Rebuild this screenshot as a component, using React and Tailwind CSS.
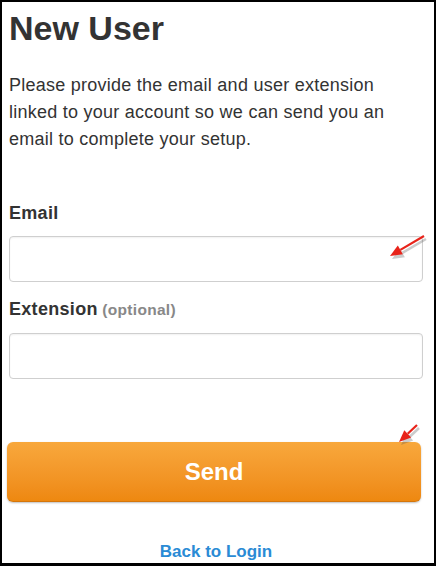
import React from "react";

const Arrow = ({ x1, y1, x2, y2 }) => {
  // arrow head pointing at (x2, y2)
  const ang = Math.atan2(y2 - y1, x2 - x1);
  const len = 12;
  const half = 5;
  const bx = x2 - len * Math.cos(ang);
  const by = y2 - len * Math.sin(ang);
  const px = -Math.sin(ang) * half;
  const py = Math.cos(ang) * half;
  const head = `${x2},${y2} ${bx + px},${by + py} ${bx - px},${by - py}`;
  return (
    <g>
      <g transform="translate(2,3)" opacity="0.3">
        <line x1={x1} y1={y1} x2={bx} y2={by} stroke="#555" strokeWidth="2.5" />
        <polygon points={head} fill="#555" />
      </g>
      <line x1={x1} y1={y1} x2={bx} y2={by} stroke="#e8231a" strokeWidth="2.2" />
      <polygon points={head} fill="#e8231a" />
    </g>
  );
};

const Field = ({ label, hint }) => (
  <>
    <label className="block text-[18px] leading-[24px] font-bold tracking-[0.3px] text-[#333]">
      {label}
      {hint && <span className="text-[15.5px] tracking-[0.3px] text-[#888]"> {hint}</span>}
    </label>
    <input
      type="text"
      className="mt-[11px] block h-[46px] w-full rounded-[4px] border border-[#cfcfcf] bg-white px-2 shadow-[inset_0_1px_2px_rgba(0,0,0,0.06)] outline-none"
    />
  </>
);

export default function App() {
  return (
    <div className="relative h-[566px] w-[436px] overflow-hidden border-t-2 border-l-2 border-r-2 border-b-[3px] border-black bg-white font-['Liberation_Sans',Arial,sans-serif]">
      <div className="pt-[7px] pl-[7px] pr-[11px]">
        <h1 className="text-[34px] leading-[38px] font-bold text-[#333]">New User</h1>

        <p className="mt-[25px] max-w-[395px] text-[18px] leading-[27px] tracking-[0.25px] text-[#333]">
          Please provide the email and user extension linked to your account so we can send you an email to complete
          your setup.
        </p>

        <div className="mt-[48px]">
          <Field label="Email" />
        </div>
        <div className="mt-[15px]">
          <Field label="Extension" hint="(optional)" />
        </div>

        <button
          type="button"
          className="mt-[63px] -ml-[2px] mr-[2px] flex h-[60px] w-full items-center justify-center rounded-[6px] border-b border-[#d5760a] bg-gradient-to-b from-[#f8a83c] to-[#ee880f] text-[24px] font-bold text-white shadow-[0_1px_2px_rgba(0,0,0,0.25)]"
        >
          Send
        </button>

        <div className="mt-[38px] text-center">
          <a href="#" className="text-[17px] leading-[20px] font-bold text-[#2a8bd5]">
            Back to Login
          </a>
        </div>
      </div>

      <svg className="pointer-events-none absolute left-[-2px] top-[-2px]" width="436" height="566">
        <Arrow x1={424} y1={236} x2={390} y2={256} />
        <Arrow x1={417} y1={425} x2={399} y2={442} />
      </svg>
    </div>
  );
}
